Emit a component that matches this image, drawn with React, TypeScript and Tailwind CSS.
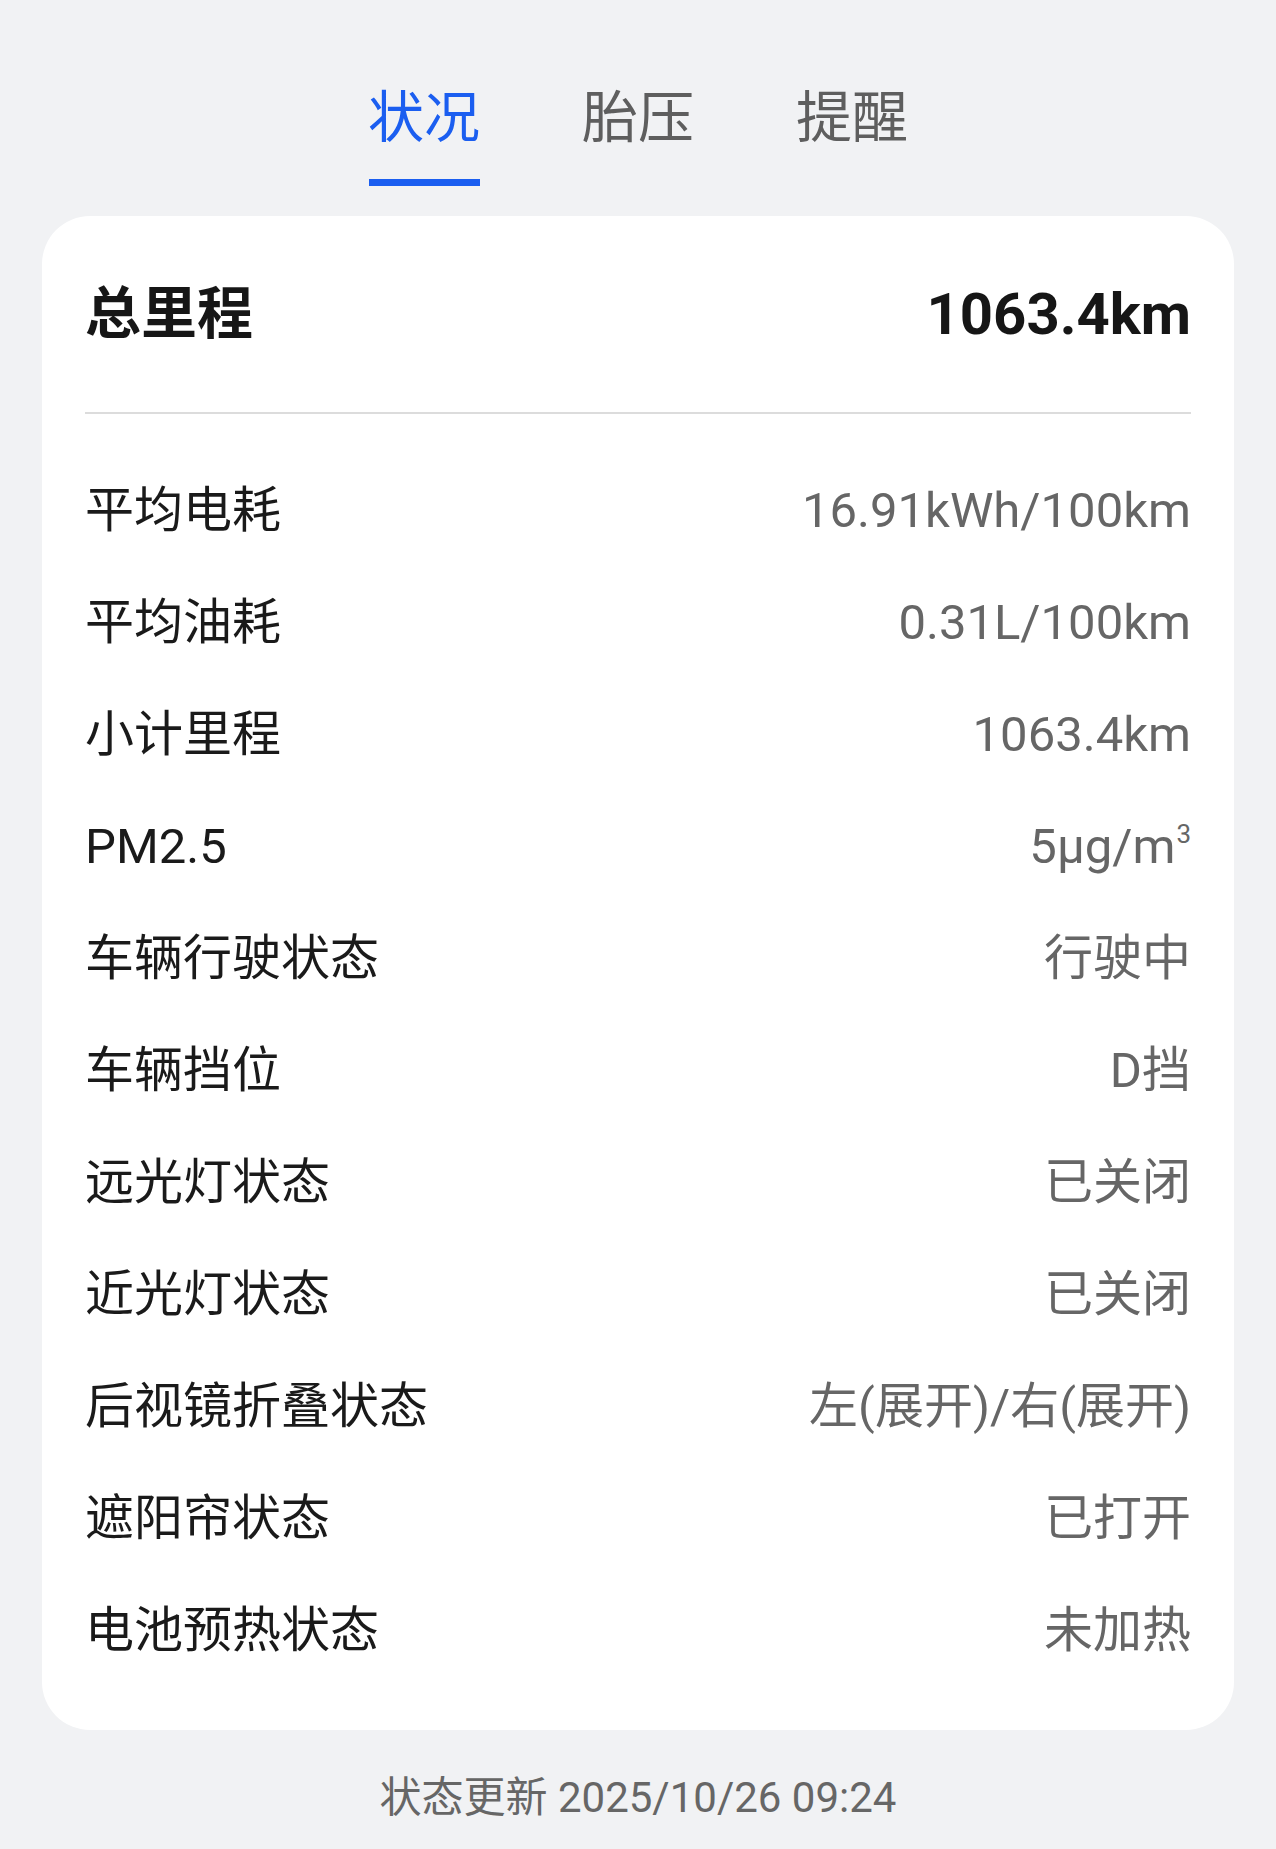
import { useState } from "react";

const tabs = ["状况", "胎压", "提醒"];

const rows: { label: string; value: React.ReactNode }[] = [
  { label: "平均电耗", value: "16.91kWh/100km" },
  { label: "平均油耗", value: "0.31L/100km" },
  { label: "小计里程", value: "1063.4km" },
  {
    label: "PM2.5",
    value: (
      <span>
        5μg/m<sup className="text-[26px] !-top-[20px] ml-[1px]">3</sup>
      </span>
    ),
  },
  { label: "车辆行驶状态", value: "行驶中" },
  { label: "车辆挡位", value: "D挡" },
  { label: "远光灯状态", value: "已关闭" },
  { label: "近光灯状态", value: "已关闭" },
  { label: "后视镜折叠状态", value: "左(展开)/右(展开)" },
  { label: "遮阳帘状态", value: "已打开" },
  { label: "电池预热状态", value: "未加热" },
];

const App = () => {
  const [active, setActive] = useState(0);

  return (
    <div className="min-h-[1849px] w-full bg-[#f1f2f4] font-['Roboto','Noto_Sans_CJK_SC',sans-serif]">
      {/* Tabs */}
      <div className="flex justify-center gap-[102px] pt-[90px]">
        {tabs.map((t, i) => (
          <button
            key={t}
            type="button"
            onClick={() => setActive(i)}
            className="flex w-[112px] flex-col items-center"
          >
            <span
              className={`text-[56px] leading-[56px] ${
                active === i ? "text-[#1b5ef0]" : "text-[#5e5e5e]"
              }`}
            >
              {t}
            </span>
            <span
              className={`mt-[33px] h-[7px] w-[111px] ${
                active === i ? "bg-[#1b5ef0]" : "bg-transparent"
              }`}
            />
          </button>
        ))}
      </div>

      {/* Card */}
      <div className="mx-[42px] mt-[30px] rounded-[48px] bg-white px-[43px] pb-[43px]">
        <div className="flex h-[196px] items-center justify-between">
          <span className="text-[56px] font-bold text-[#161616]">总里程</span>
          <span className="text-[58px] font-bold text-[#161616]">1063.4km</span>
        </div>
        <div className="h-[2px] bg-[#dcdcdc]" />

        <div className="mt-[41px] flex flex-col">
          {rows.map((r) => (
            <div key={r.label} className="flex h-[112px] items-center justify-between">
              <span className="text-[49px] text-[#1a1a1a]">{r.label}</span>
              <span className="text-[49px] text-[#666666]">{r.value}</span>
            </div>
          ))}
        </div>
      </div>

      {/* Footer */}
      <div className="flex justify-center pt-[36px]">
        <span className="text-[42px] text-[#666666]">状态更新 2025/10/26 09:24</span>
      </div>
    </div>
  );
};

export default App;
